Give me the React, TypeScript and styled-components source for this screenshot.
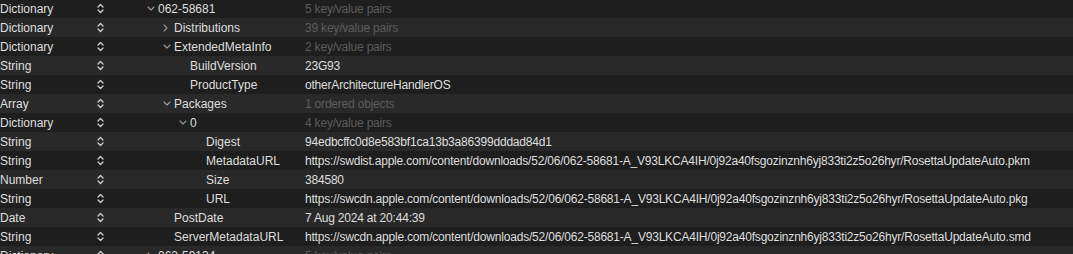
import React from "react";
import styled, { createGlobalStyle } from "styled-components";

const Global = createGlobalStyle`
  html, body { margin: 0; padding: 0; background: #1e1e1e; }
  body { width: 1073px; height: 254px; overflow: hidden; }
`;

const Viewport = styled.div`
  width: 1073px;
  height: 254px;
  overflow: hidden;
  background: #1e1e1e;
  font-family: "Liberation Sans", Arial, sans-serif;
  font-size: 12px;
  color: #dfdfdf;
`;

const List = styled.div`
  display: flex;
  flex-direction: column;
  margin-top: -1px;
`;

const Row = styled.div<{ $alt: boolean }>`
  display: flex;
  align-items: center;
  height: 19px;
  background: ${(p) => (p.$alt ? "#292929" : "#1e1e1e")};
  white-space: nowrap;
`;

const TypeCell = styled.div`
  width: 97px;
  flex: none;
`;

const Stepper = styled.div`
  width: 11px;
  flex: none;
  display: flex;
  align-items: center;
`;

const KeyCell = styled.div<{ $level: number }>`
  box-sizing: border-box;
  width: 197px;
  padding-left: ${(p) => 39 + p.$level * 16}px;
  flex: none;
  display: flex;
  align-items: center;
  overflow: hidden;
`;

const Disclosure = styled.span`
  width: 11px;
  flex: none;
  display: flex;
  align-items: center;
`;

const ValueCell = styled.div<{ $muted: boolean }>`
  flex: 1;
  letter-spacing: -0.2px;
  color: ${(p) => (p.$muted ? "#5c5c5c" : "#dfdfdf")};
`;

const UpDown = () => (
  <svg width="7" height="11" viewBox="0 0 7 11">
    <path d="M1 4 L3.5 1.5 L6 4 M1 7 L3.5 9.5 L6 7" fill="none" stroke="#cfcfcf" strokeWidth="1.3" strokeLinecap="round" strokeLinejoin="round" />
  </svg>
);

const Chevron = ({ open }: { open: boolean }) =>
  open ? (
    <svg width="8" height="5" viewBox="0 0 8 5">
      <path d="M1 1 L4 4 L7 1" fill="none" stroke="#9b9b9b" strokeWidth="1.1" strokeLinecap="round" strokeLinejoin="round" />
    </svg>
  ) : (
    <svg width="5" height="8" viewBox="0 0 5 8">
      <path d="M1 1 L4 4 L1 7" fill="none" stroke="#9b9b9b" strokeWidth="1.1" strokeLinecap="round" strokeLinejoin="round" />
    </svg>
  );

type Item = {
  type: string;
  level: number;
  disc?: "open" | "closed";
  key: string;
  value: string;
  muted?: boolean;
};

const URL_BASE = "/content/downloads/52/06/062-58681-A_V93LKCA4IH/0j92a40fsgozinznh6yj833ti2z5o26hyr/RosettaUpdateAuto";

const items: Item[] = [
  { type: "Dictionary", level: 0, disc: "open", key: "062-58681", value: "5 key/value pairs", muted: true },
  { type: "Dictionary", level: 1, disc: "closed", key: "Distributions", value: "39 key/value pairs", muted: true },
  { type: "Dictionary", level: 1, disc: "open", key: "ExtendedMetaInfo", value: "2 key/value pairs", muted: true },
  { type: "String", level: 2, key: "BuildVersion", value: "23G93" },
  { type: "String", level: 2, key: "ProductType", value: "otherArchitectureHandlerOS" },
  { type: "Array", level: 1, disc: "open", key: "Packages", value: "1 ordered objects", muted: true },
  { type: "Dictionary", level: 2, disc: "open", key: "0", value: "4 key/value pairs", muted: true },
  { type: "String", level: 3, key: "Digest", value: "94edbcffc0d8e583bf1ca13b3a86399dddad84d1" },
  { type: "String", level: 3, key: "MetadataURL", value: "https://swdist.apple.com" + URL_BASE + ".pkm" },
  { type: "Number", level: 3, key: "Size", value: "384580" },
  { type: "String", level: 3, key: "URL", value: "https://swcdn.apple.com" + URL_BASE + ".pkg" },
  { type: "Date", level: 1, key: "PostDate", value: "7 Aug 2024 at 20:44:39" },
  { type: "String", level: 1, key: "ServerMetadataURL", value: "https://swcdn.apple.com" + URL_BASE + ".smd" },
  { type: "Dictionary", level: 0, disc: "closed", key: "062-59134", value: "5 key/value pairs", muted: true },
];

export default function App() {
  return (
    <Viewport>
      <Global />
      <List>
        {items.map((it, i) => (
          <Row key={i} $alt={i % 2 === 1}>
            <TypeCell>{it.type}</TypeCell>
            <Stepper>
              <UpDown />
            </Stepper>
            <KeyCell $level={it.level}>
              <Disclosure>{it.disc && <Chevron open={it.disc === "open"} />}</Disclosure>
              {it.key}
            </KeyCell>
            <ValueCell $muted={!!it.muted}>{it.value}</ValueCell>
          </Row>
        ))}
      </List>
    </Viewport>
  );
}
